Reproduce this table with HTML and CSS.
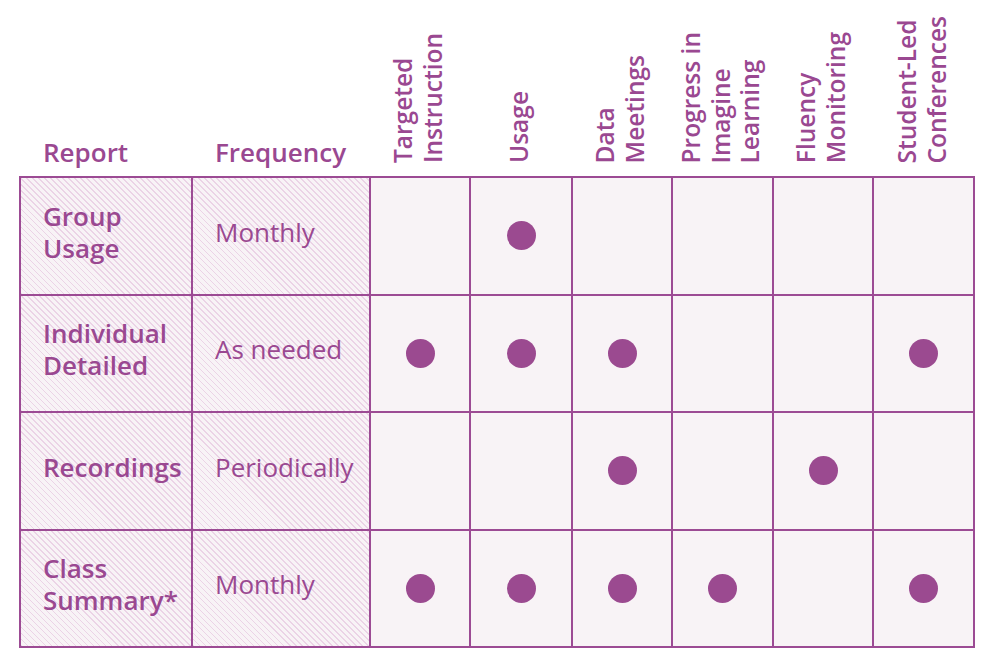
FILE: index.html
```html
<!DOCTYPE html>
<html lang="en">
<head>
<meta charset="utf-8">
<title>Reports</title>
<link rel="stylesheet" href="styles.css">
</head>
<body>
<table class="grid">
  <colgroup>
    <col class="c-report">
    <col class="c-freq">
    <col class="c-a">
    <col class="c-b">
    <col class="c-a">
    <col class="c-c">
    <col class="c-a">
    <col class="c-c">
  </colgroup>
  <thead>
    <tr class="head-row">
      <th class="h-text">Report</th>
      <th class="h-text">Frequency</th>
      <th class="h-vert"><span class="vert">Targeted<br>Instruction</span></th>
      <th class="h-vert"><span class="vert">Usage</span></th>
      <th class="h-vert"><span class="vert">Data<br>Meetings</span></th>
      <th class="h-vert"><span class="vert">Progress in<br>Imagine<br>Learning</span></th>
      <th class="h-vert"><span class="vert">Fluency<br>Monitoring</span></th>
      <th class="h-vert"><span class="vert">Student-Led<br>Conferences</span></th>
    </tr>
  </thead>
  <tbody>
    <tr class="row">
      <td class="label hatch">Group<br>Usage</td>
      <td class="freq hatch">Monthly</td>
      <td class="mark"></td>
      <td class="mark"><span class="dot"></span></td>
      <td class="mark"></td>
      <td class="mark"></td>
      <td class="mark"></td>
      <td class="mark"></td>
    </tr>
    <tr class="row">
      <td class="label hatch">Individual<br>Detailed</td>
      <td class="freq hatch">As needed</td>
      <td class="mark"><span class="dot"></span></td>
      <td class="mark"><span class="dot"></span></td>
      <td class="mark"><span class="dot"></span></td>
      <td class="mark"></td>
      <td class="mark"></td>
      <td class="mark"><span class="dot"></span></td>
    </tr>
    <tr class="row">
      <td class="label hatch">Recordings</td>
      <td class="freq hatch">Periodically</td>
      <td class="mark"></td>
      <td class="mark"></td>
      <td class="mark"><span class="dot"></span></td>
      <td class="mark"></td>
      <td class="mark"><span class="dot"></span></td>
      <td class="mark"></td>
    </tr>
    <tr class="row">
      <td class="label hatch">Class<br>Summary*</td>
      <td class="freq hatch">Monthly</td>
      <td class="mark"><span class="dot"></span></td>
      <td class="mark"><span class="dot"></span></td>
      <td class="mark"><span class="dot"></span></td>
      <td class="mark"><span class="dot"></span></td>
      <td class="mark"></td>
      <td class="mark"><span class="dot"></span></td>
    </tr>
  </tbody>
</table>
</body>
</html>
```

FILE: styles.css
```css
html, body {
  margin: 0;
  padding: 0;
  background: #ffffff;
}

body {
  font-family: "Open Sans", "Liberation Sans", sans-serif;
  color: #9a4891;
}

.grid {
  border-collapse: collapse;
  table-layout: fixed;
  width: 956px;
  margin-left: 19px;
}

.c-report { width: 172px; }
.c-freq { width: 178px; }
.c-a { width: 100px; }
.c-b { width: 102px; }
.c-c { width: 101px; }

.head-row {
  height: 177px;
}

.head-row th {
  padding: 0;
  vertical-align: bottom;
  border: none;
}

.h-text {
  text-align: left;
  font-size: 26px;
  font-weight: 600;
  line-height: 30px;
  padding-left: 23px !important;
  padding-bottom: 9px !important;
}

.h-vert {
  text-align: center;
  padding-bottom: 8px !important;
  padding-right: 5px !important;
}

.vert {
  display: inline-block;
  writing-mode: vertical-rl;
  transform: rotate(180deg);
  white-space: nowrap;
  text-align: start;
  font-size: 24.5px;
  font-weight: 600;
  line-height: 29.5px;
}

.row {
  height: 117.5px;
}

.row td {
  border: 2px solid #9c4b94;
  background: #f8f3f6;
  padding: 0;
  vertical-align: middle;
}

.row td.hatch {
  background-color: #f8f3f6;
  background-image: repeating-linear-gradient(
    45deg,
    #ebd3e6 0px,
    #ebd3e6 1.3px,
    transparent 1.3px,
    transparent 4.25px
  );
}

.label {
  font-size: 26px;
  font-weight: 600;
  line-height: 32px;
  padding-left: 22px !important;
  padding-bottom: 8px !important;
}

.freq {
  font-size: 26px;
  font-weight: 400;
  line-height: 32px;
  padding-left: 22px !important;
  padding-bottom: 8px !important;
}

.mark {
  text-align: center;
}

.dot {
  display: inline-block;
  width: 29px;
  height: 29px;
  border-radius: 50%;
  background: #9b4a90;
  vertical-align: middle;
}
```
